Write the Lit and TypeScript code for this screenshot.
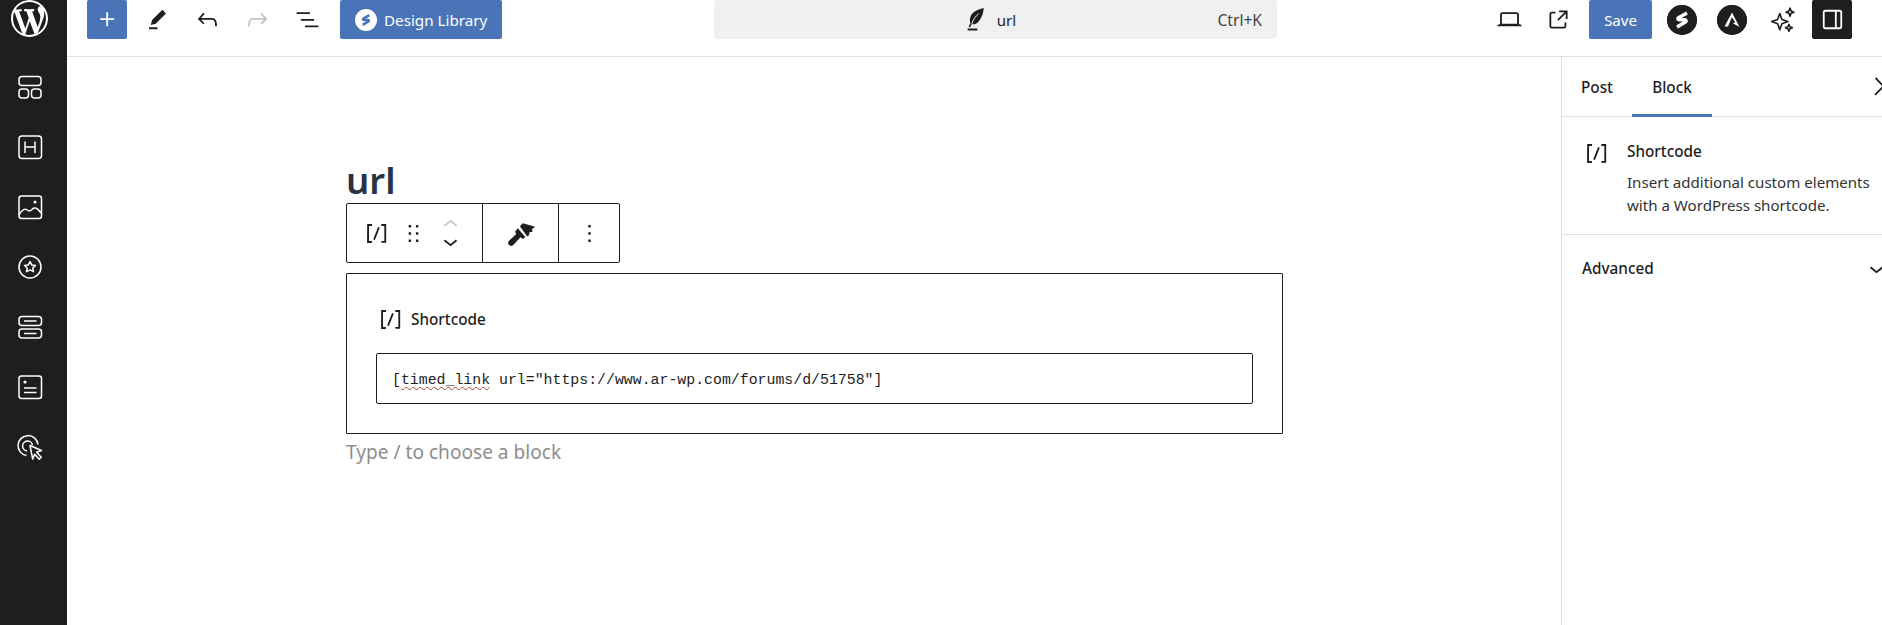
import { LitElement, html, css, svg } from "lit";
import { customElement } from "lit/decorators.js";

const P = {
  wp: "M20 10c0-5.51-4.49-10-10-10C4.48 0 0 4.49 0 10c0 5.52 4.48 10 10 10 5.51 0 10-4.48 10-10zM7.78 15.37L4.37 6.22c.55-.02 1.17-.08 1.17-.08.5-.06.44-1.13-.06-1.11 0 0-1.45.11-2.37.11-.18 0-.37 0-.58-.01C4.12 2.69 6.87 1.11 10 1.11c2.33 0 4.45.87 6.05 2.34-.68-.11-1.65.39-1.65 1.58 0 .74.45 1.36.9 2.1.35.61.55 1.36.55 2.46 0 1.49-1.4 5-1.4 5l-3.03-8.37c.54-.02.82-.17.82-.17.5-.05.44-1.25-.06-1.22 0 0-1.44.12-2.38.12-.87 0-2.33-.12-2.33-.12-.5-.03-.56 1.2-.06 1.22l.92.08 1.26 3.41zM17.41 10c.24-.64.74-1.87.43-4.25.7 1.29 1.05 2.71 1.05 4.25 0 3.29-1.73 6.24-4.4 7.78.97-2.59 1.94-5.2 2.92-7.78zM6.1 18.09C3.12 16.65 1.11 13.53 1.11 10c0-1.3.23-2.48.72-3.59C3.25 10.3 4.67 14.2 6.1 18.09zm4.03-6.63l2.58 6.98c-.86.29-1.76.45-2.71.45-.79 0-1.57-.11-2.29-.33.81-2.38 1.62-4.74 2.42-7.1z",
  plus: "M11 12.5V17.5H12.5V12.5H17.5V11H12.5V6H11V11H6V12.5H11Z",
  edit: "m19 7-3-3-8.5 8.5-1 4 4-1L19 7Zm-7 11.5H5V20h7v-1.5Z",
  undo: "M18.3 11.7c-.6-.6-1.4-.9-2.3-.9H6.7l2.9-3.3-1.1-1-4.5 5L8.5 16l1-1-2.7-2.7H16c.5 0 .9.2 1.3.5 1 1 1 3.4 1 4.5v.3h1.5v-.2c0-1.5 0-4.3-1.5-5.7z",
  redo: "M15.6 6.5l-1.1 1 2.9 3.3H8c-.9 0-1.7.3-2.3.9-1.4 1.5-1.4 4.2-1.4 5.6v.2h1.5v-.3c0-1.1 0-3.5 1-4.5.3-.3.7-.5 1.3-.5h9.2L14.5 15l1.1 1.1 4.6-4.6-4.6-5z",
  list: "M3 6h11v1.5H3V6Zm3.5 5.5h11V13h-11v-1.5ZM21 17H10v1.5h11V17Z",
  laptop: "M20.5 16h-.7V8c0-1.1-.9-2-2-2H6.2c-1.1 0-2 .9-2 2v8h-.7c-.8 0-1.5.7-1.5 1.5h20c0-.8-.7-1.5-1.5-1.5zM5.7 8c0-.3.2-.5.5-.5h11.6c.3 0 .5.2.5.5v7.6H5.7V8z",
  external: "M19.5 4.5h-7V6h4.44l-5.97 5.97 1.06 1.06L18 7.06v4.44h1.5v-7Zm-13 1a2 2 0 0 0-2 2v10a2 2 0 0 0 2 2h10a2 2 0 0 0 2-2v-3H17v3a.5.5 0 0 1-.5.5h-10a.5.5 0 0 1-.5-.5v-10a.5.5 0 0 1 .5-.5h3V5.5h-3Z",
  sidebar: "M18 4H6c-1.1 0-2 .9-2 2v12c0 1.1.9 2 2 2h12c1.1 0 2-.9 2-2V6c0-1.1-.9-2-2-2zm-4 14.5H6c-.3 0-.5-.2-.5-.5V6c0-.3.2-.5.5-.5h8v13zm4.5-.5c0 .3-.2.5-.5.5h-2.5v-13H18c.3 0 .5.2.5.5v12z",
  more: "M13 19h-2v-2h2v2zm0-6h-2v-2h2v2zm0-6h-2V5h2v2z",
  shortcode: "M16 4.2v1.5h2.5v12.5H16v1.5h4V4.2h-4zM4.2 19.8h4v-1.5H5.8V5.8h2.5V4.2h-4l-.1 15.6zm5.1-3.1l1.4.6 4-10-1.4-.6-4 10z",
  drag: "M8 7h2V5H8v2zm0 6h2v-2H8v2zm0 6h2v-2H8v2zm6-14v2h2V5h-2zm0 8h2v-2h-2v2zm0 6h2v-2h-2v2z",
  up: "M6.5 12.4L12 8l5.5 4.4-.9 1.2L12 10l-4.5 3.6-1-1.2z",
  down: "M17.5 11.6L12 16l-5.5-4.4.9-1.2L12 14l4.5-3.6 1 1.2z",
  close: "M13 11.8l6.1-6.3-1-1-6.1 6.2-6.1-6.3-1 1.1 6.1 6.3-6.5 6.7 1 1 6.5-6.6 6.5 6.6 1-1z",
  brush: "M11.500 6 14 3.500 24 6.500 21.500 8.500 22 10.500 19.500 11 19 13.500 17.500 14.500ZM9.800 7.700 16 14.800 14 16.500 12 15 6 21.500c-1 1-2.600 1-3.500.1-1-1-.9-2.500 0-3.500l6-5.600-1-2z",
  feather: "M18.800 2.500C13 4 8.500 6 7.500 11c-.3 1.800-.1 3 .3 4L6.300 18l1.200.6 1.300-2.800c2 .5 4-.2 5.500-1.800 3-3.300 4.300-7.500 4.500-11.500zM5.500 19.500h8V21h-8z",
};

const I = 29;
const ic = (d: string, size = I, vb = "0 0 24 24") =>
  html`<svg class="ic" width=${size} height=${size} viewBox=${vb} fill="currentColor" aria-hidden="true"><path d=${d}></path></svg>`;

const rail = [
  svg`<rect x="1" y="1.5" width="22" height="9" rx="3"/><rect x="1" y="14" width="9.5" height="9" rx="3"/><rect x="13.5" y="14" width="9.5" height="9" rx="3"/>`,
  svg`<rect x="1" y="1" width="22.5" height="22.5" rx="3"/><path d="M7 6.5v11.5M17 6.5v11.5M7 12h10"/>`,
  svg`<rect x="1" y="1" width="22.5" height="22.5" rx="2.5"/><circle cx="17" cy="7" r="1.5" fill="#fff" stroke="none"/><path d="M1 20c3-6 6.5-7 9-4.5 2.500 2 4-2 6-2.500s5 2 7 5"/>`,
  svg`<circle cx="12" cy="12" r="11"/><path d="M12 6.500l1.700 3.400 3.800.5-2.700 2.600.7 3.700-3.500-1.800-3.500 1.800.7-3.700-2.700-2.600 3.800-.5z" stroke-linejoin="round"/>`,
  svg`<rect x="1" y="1.500" width="22.500" height="9" rx="3"/><rect x="1" y="14" width="22.500" height="9" rx="3"/><path d="M6 6h12.500M6 18.500h12.500"/>`,
  svg`<rect x="1" y="1" width="22.500" height="22.500" rx="2.500"/><circle cx="7" cy="7" r="1.600" fill="#fff" stroke="none"/><path d="M6 13h12.500M6 17.500h12.500"/>`,
  svg`<path d="M8.500 20.500a10 10 0 1 1 11.500-11M9 16a5 5 0 1 1 5.500-6" /><path d="M12 10.500l11.500 5-4.800 1.800 4.500 5-2 2-4.600-5-1.900 4.800z" stroke-linejoin="round"/>`,
];

@customElement("app-root")
export class AppRoot extends LitElement {
  static styles = css`
    :host {
      display: flex;
      flex-direction: column;
      width: 100%;
      height: 100vh;
      overflow: hidden;
      background: #fff;
      color: #1e1e1e;
      font-family: "Noto Sans", "Open Sans", sans-serif;
      font-size: 15px;
    }
    svg { display: block; flex: none; }
    .top {
      flex: none;
      display: flex;
      height: 56px;
      border-bottom: 1px solid #e0e0e0;
      align-items: flex-start;
      white-space: nowrap;
    }
    .logo {
      flex: none;
      width: 67px;
      height: 57px;
      background: #1e1e1e;
      color: #fff;
      box-sizing: border-box;
      padding: 0 0 0 11px;
    }
    .left { display: flex; margin-left: 20px; }
    .btn {
      flex: none;
      width: 40px;
      height: 39px;
      display: flex;
      align-items: center;
      justify-content: center;
      box-sizing: border-box;
      border-radius: 2px;
    }
    .primary { background: #4a74b8; color: #fff; }
    .undo { margin-left: 10px; }
    .redo { color: #c4c4c4; }
    .lib {
      display: flex;
      align-items: center;
      width: 162px;
      height: 39px;
      margin-left: 13px;
      box-sizing: border-box;
      padding-left: 15px;
      gap: 7px;
      background: #4a74b8;
      color: #fff;
      font-size: 15.2px;
      border-radius: 2px;
    }
    .search {
      flex: none;
      display: flex;
      align-items: center;
      justify-content: center;
      width: 563px;
      height: 39px;
      margin-left: 212px;
      background: #f0f0f0;
      border-radius: 4px;
      position: relative;
      font-size: 15px;
      gap: 7px;
      padding-right: 14px;
      box-sizing: border-box;
    }
    .search .kbd { position: absolute; right: 15px; color: #444; font-size: 15.6px; }
    .right { display: flex; align-items: center; height: 39px; margin-left: 212px; }
    .save {
      width: 63px;
      height: 39px;
      margin-left: 11px;
      background: #4a74b8;
      color: #fff;
      display: flex;
      align-items: center;
      justify-content: center;
      font-size: 15px;
      border-radius: 2px;
    }
    .sel { background: #1e1e1e; color: #fff; margin-left: 3px; }
    .kebab { margin-left: 11px; }
    .body { flex: 1; display: flex; min-height: 0; }
    .rail {
      flex: none;
      width: 67px;
      background: #1e1e1e;
      color: #fff;
    }
    .rail-item { height: 60px; display: flex; align-items: center; padding-left: 18px; }
    .rail-item svg { fill: none; stroke: #fff; stroke-width: 1.500; overflow: visible; }
    .canvas { flex: 1; min-width: 0; padding: 101px 0 0 279px; }
    .editor { width: 937px; }
    h1 {
      margin: 0;
      height: 45px;
      font-size: 36.5px;
      line-height: 45px;
      font-weight: 600;
      color: #2a3342;
    }
    .toolbar {
      display: flex;
      width: 274px;
      height: 60px;
      box-sizing: border-box;
      border: 1px solid #1e1e1e;
      border-radius: 2px;
      background: #fff;
    }
    .tb-sec { display: flex; align-items: center; justify-content: center; box-sizing: border-box; }
    .tb-1 { width: 136px; border-right: 1px solid #1e1e1e; padding-left: 15px; gap: 8px; justify-content: flex-start; }
    .tb-2 { width: 76px; border-right: 1px solid #1e1e1e; }
    .tb-3 { flex: 1; }
    .mover { display: flex; flex-direction: column; width: 29px; }
    .mover svg:first-child { color: #c8c8c8; margin-bottom: -12px; }
    .block {
      margin-top: 10px;
      height: 161px;
      box-sizing: border-box;
      border: 1px solid #1e1e1e;
      border-radius: 1px;
      padding: 31px 29px 0;
    }
    .block-label { display: flex; align-items: center; gap: 6px; height: 28px; margin-bottom: 20px; font-size: 15.300px; font-weight: 500; }
    .code {
      height: 51px;
      box-sizing: border-box;
      border: 1px solid #1e1e1e;
      border-radius: 2px;
      padding: 2px 15px 0;
      display: flex;
      align-items: center;
      font-family: "Liberation Mono", "DejaVu Sans Mono", monospace;
      font-size: 14.870px;
      color: #1e1e1e;
    }
    .code > span { white-space: pre; }
    .squig { text-decoration: underline wavy #b3443c 1px; text-underline-offset: 2px; }
    .ph { margin-top: 4px; font-size: 19.100px; line-height: 28px; color: #8d8d8d; }
    .panel {
      flex: none;
      width: 321px;
      box-sizing: border-box;
      border-left: 1px solid #e0e0e0;
      overflow: hidden;
    }
    .tabs { display: flex; height: 59px; border-bottom: 1px solid #e0e0e0; position: relative; align-items: stretch; }
    .tab { display: flex; align-items: center; justify-content: center; font-weight: 500; font-size: 15.300px; box-sizing: border-box; }
    .tab.post { width: 70px; }
    .tab.blk { width: 80px; border-bottom: 3px solid #4a74b8; height: 60px; padding-top: 3px; }
    .close { position: absolute; left: 307px; top: 15px; }
    .card { display: flex; gap: 16px; padding: 22px 16px 0 20px; height: 118px; box-sizing: border-box; border-bottom: 1px solid #e0e0e0; }
    .card-title { font-weight: 500; font-size: 15.300px; line-height: 24px; }
    .card-text { margin-top: 8px; font-size: 15.100px; line-height: 23px; white-space: nowrap; color: #333; }
    .adv { display: flex; align-items: center; height: 66px; padding-left: 20px; font-weight: 500; font-size: 15.300px; position: relative; }
    .adv svg { position: absolute; left: 300px; top: 19px; }
    .s-circle { width: 30px; height: 30px; border-radius: 50%; background: #1e1e1e; }
    .slot { flex: none; width: 50px; height: 39px; display: flex; align-items: center; justify-content: center; }
    .slot.first { margin-left: 5px; }
    .slot.wide { width: 52px; }
    .tool { flex: none; width: 40px; height: 39px; display: flex; align-items: center; justify-content: center; }
    .sm { margin-left: 9px; }
  `;

  render() {
    return html`
      <div class="top">
        <div class="logo">${ic(P.wp, 37, "0 0 20 20")}</div>
        <div class="left">
          <div class="btn primary">${ic(P.plus)}</div>
          <div class="btn undo">${ic(P.edit)}</div>
          <div class="btn undo">${ic(P.undo)}</div>
          <div class="btn undo redo">${ic(P.redo)}</div>
          <div class="btn undo">${ic(P.list)}</div>
          <div class="lib">
            <svg width="22" height="22" viewBox="0 0 30 30">
              <circle cx="15" cy="15" r="15" fill="#fff"></circle>
              <path d="M19.500 8.500 11.500 13c-1.200.8-.6 2 .8 2h5.200c1.400 0 2 1.200.8 2L10.500 21.500" fill="none" stroke="#4a74b8" stroke-width="3.500" stroke-linejoin="round"></path>
            </svg>
            Design Library
          </div>
        </div>
        <div class="search">
          <svg width="29" height="29" viewBox="0 0 24 24">
            <path d=${P.feather} fill="#1e1e1e"></path>
            <path d="M9 15.600c1-3.500 2.800-6 5.600-8.400" fill="none" stroke="#f0f0f0" stroke-width=".8"></path>
          </svg>
          <span>url</span>
          <span class="kbd">Ctrl+K</span>
        </div>
        <div class="right">
          <div class="tool">${ic(P.laptop)}</div>
          <div class="tool sm">${ic(P.external)}</div>
          <div class="save">Save</div>
          <div class="slot first">
            <svg class="s-circle" viewBox="0 0 30 30">
              <circle cx="15" cy="15" r="15" fill="#1e1e1e"></circle>
              <path d="M20 8 11.500 12.700c-1.200.8-.6 2.100.8 2.100h5.400c1.400 0 2 1.300.8 2.100L10 22" fill="none" stroke="#fff" stroke-width="3.500" stroke-linejoin="round"></path>
            </svg>
          </div>
          <div class="slot">
            <svg class="s-circle" viewBox="0 0 30 30">
              <circle cx="15" cy="15" r="15" fill="#1e1e1e"></circle>
              <path d="M15 7.500 22.500 22 15.800 18.300 18.200 17.300 14.800 12.300 11 21.500H7.500Z" fill="#fff"></path>
            </svg>
          </div>
          <div class="slot wide">
            <svg width="28" height="28" viewBox="0 0 26 26" fill="none" stroke="#1e1e1e" stroke-width="1.500" stroke-linejoin="round">
              <path d="M10 7l2 5.500 5.500 2-5.500 2L10 22l-2-5.500-5.500-2 5.500-2z"></path>
              <path d="M19.500 2l1 2.700 2.700 1-2.700 1-1 2.700-1-2.700-2.700-1 2.700-1z"></path>
              <path d="M18.500 17l.9 2.300 2.300.9-2.300.9-.9 2.300-.9-2.300-2.300-.9 2.300-.9z"></path>
            </svg>
          </div>
          <div class="btn sel">${ic(P.sidebar)}</div>
          <div class="btn kebab">${ic(P.more)}</div>
        </div>
      </div>
      <div class="body">
        <div class="rail">
          ${rail.map((r) => html`<div class="rail-item"><svg width="24" height="24" viewBox="0 0 24 24">${r}</svg></div>`)}
        </div>
        <div class="canvas">
          <div class="editor">
            <h1>url</h1>
            <div class="toolbar">
              <div class="tb-sec tb-1">
                ${ic(P.shortcode)}
                ${ic(P.drag)}
                <div class="mover">${ic(P.up)}${ic(P.down)}</div>
              </div>
              <div class="tb-sec tb-2">${ic(P.brush)}</div>
              <div class="tb-sec tb-3">${ic(P.more)}</div>
            </div>
            <div class="block">
              <div class="block-label">${ic(P.shortcode)}<span>Shortcode</span></div>
              <div class="code"><span>[<span class="squig">timed_link</span> url="https://www.ar-wp.com/forums/d/51758"]</span></div>
            </div>
            <div class="ph">Type / to choose a block</div>
          </div>
        </div>
        <div class="panel">
          <div class="tabs">
            <div class="tab post">Post</div>
            <div class="tab blk">Block</div>
            <div class="close">${ic(P.close)}</div>
          </div>
          <div class="card">
            ${ic(P.shortcode)}
            <div>
              <div class="card-title">Shortcode</div>
              <div class="card-text">Insert additional custom elements<br />with a WordPress shortcode.</div>
            </div>
          </div>
          <div class="adv">Advanced ${ic(P.down)}</div>
        </div>
      </div>
    `;
  }
}
